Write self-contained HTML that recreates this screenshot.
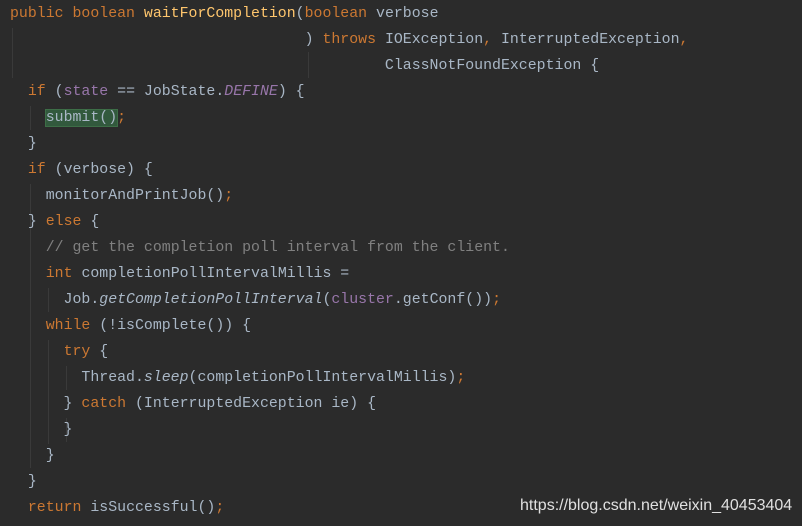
<!DOCTYPE html>
<html><head><meta charset="utf-8"><style>
html,body{margin:0;padding:0;background:#2b2b2b;width:802px;height:526px;overflow:hidden;position:relative}
pre{position:absolute;left:10px;top:1px;margin:0;font-family:"Liberation Mono",monospace;font-size:14.88px;line-height:26px;color:#a9b7c6;white-space:pre}
.k{color:#cc7832}.m{color:#ffc66d}.f{color:#9876aa}.i{font-style:italic}.c{color:#808080}
.hl{background:#32593d;outline:1px solid #3d6e47}
.g{position:absolute;width:1px;background:#3a3a3a}
.wm{position:absolute;left:520px;top:497px;font-family:"Liberation Sans",sans-serif;font-size:16px;color:#e0e0e0}
</style></head><body>
<div class="g" style="left:12px;top:28px;height:50px"></div>
<div class="g" style="left:308px;top:52px;height:26px"></div>
<div class="g" style="left:30px;top:106px;height:24px"></div>
<div class="g" style="left:30px;top:184px;height:284px"></div>
<div class="g" style="left:48px;top:288px;height:24px"></div>
<div class="g" style="left:48px;top:340px;height:104px"></div>
<div class="g" style="left:66px;top:366px;height:24px"></div>
<div class="g" style="left:66px;top:418px;height:24px"></div>
<pre><span class="k">public boolean </span><span class="m">waitForCompletion</span>(<span class="k">boolean </span>verbose
                                 ) <span class="k">throws </span>IOException<span class="k">, </span>InterruptedException<span class="k">,</span>
                                          ClassNotFoundException {
  <span class="k">if </span>(<span class="f">state </span>== JobState.<span class="f i">DEFINE</span>) {
    <span class="hl">submit()</span><span class="k">;</span>
  }
  <span class="k">if </span>(verbose) {
    monitorAndPrintJob()<span class="k">;</span>
  } <span class="k">else </span>{
    <span class="c">// get the completion poll interval from the client.</span>
    <span class="k">int </span>completionPollIntervalMillis =
      Job.<span class="i">getCompletionPollInterval</span>(<span class="f">cluster</span>.getConf())<span class="k">;</span>
    <span class="k">while </span>(!isComplete()) {
      <span class="k">try </span>{
        Thread.<span class="i">sleep</span>(completionPollIntervalMillis)<span class="k">;</span>
      } <span class="k">catch </span>(InterruptedException ie) {
      }
    }
  }
  <span class="k">return </span>isSuccessful()<span class="k">;</span></pre>
<div class="wm">https://blog.csdn.net/weixin_40453404</div>
</body></html>
